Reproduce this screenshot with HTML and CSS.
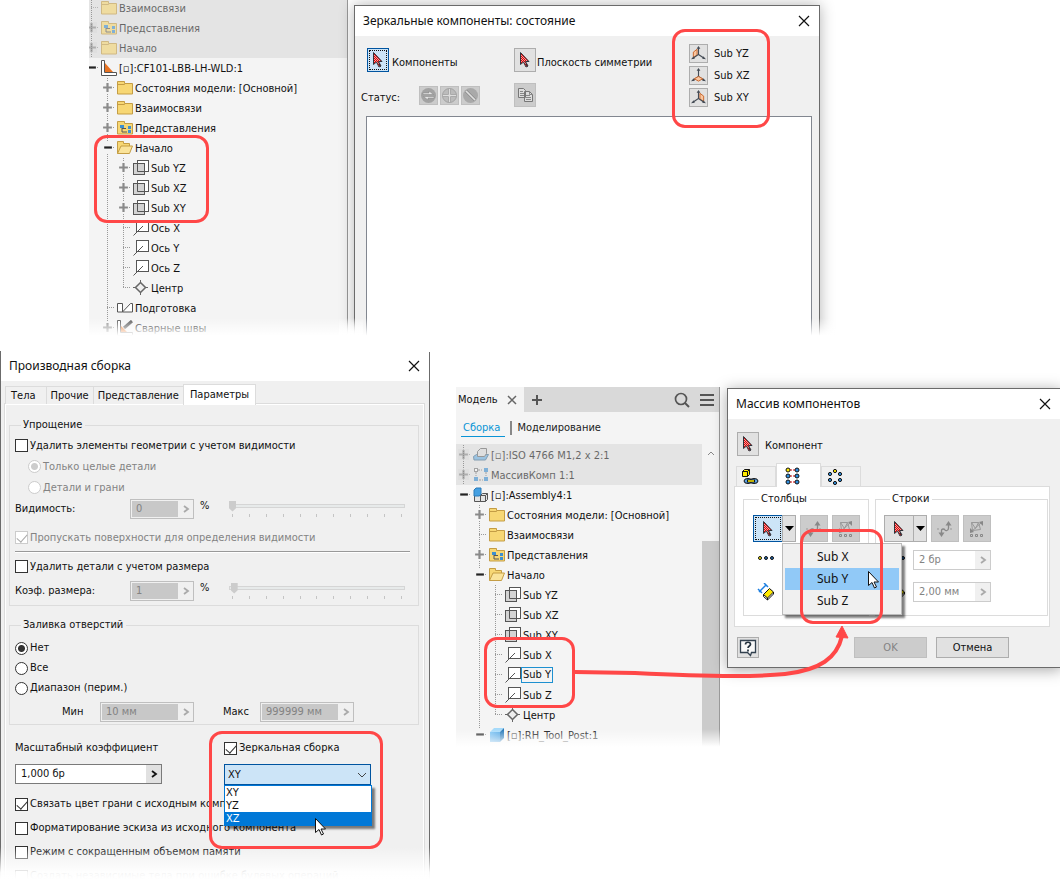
FILE: index.html
```html
<!DOCTYPE html>
<html lang="ru">

<head>
    <meta charset="UTF-8">
    <meta name="viewport" content="width=device-width, initial-scale=1.0">
    <title>Зеркальные компоненты</title>
    <link rel="stylesheet" href="styles.css">
</head>

<body>

    <!-- Icon set -->
    <svg class="icon-set" aria-hidden="true">
        <defs>
            <pattern id="dots-red" width="2" height="2" patternUnits="userSpaceOnUse">
                <rect width="2" height="2" fill="#f3a0a0" />
                <rect width="1" height="1" fill="#e00000" />
                <rect x="1" y="1" width="1" height="1" fill="#e00000" />
            </pattern>
            <linearGradient id="blue-face" x1="0" y1="0" x2="1" y2="1">
                <stop offset="0" stop-color="#7cc4f5" />
                <stop offset="1" stop-color="#2f8fd6" />
            </linearGradient>
        </defs>
        <symbol id="plus" viewBox="0 0 10 10"><path d="M1 5h8M5 1v8" stroke="#8a8a8a" stroke-width="2" /></symbol>
        <symbol id="minus" viewBox="0 0 10 10"><path d="M2 5h7" stroke="#222" stroke-width="2" /></symbol>
        <symbol id="folder" viewBox="0 0 16 16">
            <path d="M.5 1.500h7v2h8v10.500H.5z" fill="#f7d774" stroke="#c49d45" />
            <path d="M.5 4.500h7l1-1" fill="none" stroke="#c49d45" />
        </symbol>
        <symbol id="folder-open" viewBox="0 0 16 16">
            <path d="M.5 13.500v-12h6v2h6v2.500" fill="#f7d774" stroke="#c49d45" />
            <path d="M.5 13.500l3.500-7.500h11.500l-3 7.500z" fill="#fae39a" stroke="#c49d45" />
        </symbol>
        <symbol id="folder-views" viewBox="0 0 16 16">
            <path d="M.5 1.500h7v2h8v10.500H.5z" fill="#f7d774" stroke="#c49d45" />
            <path d="M5 8v4h5M5 8.500h4" fill="none" stroke="#555" />
            <path d="M3 5h4v3H3zM11 6h3v3h-3zM11 10h3v3h-3z" fill="#3d8fd0" />
        </symbol>
        <symbol id="plane" viewBox="0 0 16 16">
            <rect x="4.500" y=".5" width="11" height="11" fill="#fff" stroke="#555" />
            <rect x=".5" y="3.500" width="11" height="11" fill="#ccc" fill-opacity=".85" stroke="#555" />
            <path d="M4.500 4v7.500H11" fill="none" stroke="#555" />
        </symbol>
        <symbol id="axis" viewBox="0 0 16 16">
            <rect x="3.500" y=".5" width="12" height="11" fill="#fff" stroke="#555" />
            <path d="M.5 15.500L10 6" stroke="#555" />
        </symbol>
        <symbol id="center" viewBox="0 0 16 16">
            <path d="M0 7.500h15M7.500 0v15" stroke="#666" />
            <path d="M7.500 2.500l5 5-5 5-5-5z" fill="#eee" stroke="#666" stroke-width="1.500" />
        </symbol>
        <symbol id="weldment" viewBox="0 0 16 16">
            <path d="M4 3l8 9H4z" fill="#e87424" />
            <path d="M.5.5h3v12h12v3H.5z" fill="#fff" stroke="#555" />
        </symbol>
        <symbol id="prep" viewBox="0 0 16 16">
            <path d="M.5 3.500h5v8.500h-5zM5.500 12l8-8.500h2V12z" fill="#fff" stroke="#555" />
        </symbol>
        <symbol id="seam" viewBox="0 0 16 16">
            <path d="M.5.500h3v12h12v3H.5z" fill="#fff" stroke="#555" />
            <path d="M4 6l6 6H4z" fill="#e87424" />
            <path d="M7 8l8-7" stroke="#555" stroke-width="3" />
        </symbol>
        <symbol id="cube" viewBox="0 0 16 16">
            <path d="M1 5l4-4h10l-4 4z" fill="#a5dafa" />
            <path d="M1 5h10v10H1z" fill="url(#blue-face)" />
            <path d="M11 5l4-4v10l-4 4z" fill="#2276b8" />
        </symbol>
        <symbol id="assembly" viewBox="0 0 16 16">
            <path d="M1.500 8.500h6v6h-6zM7.500 8.500l2-2h5v6l-2 2h-5z" fill="#e4e4e4" stroke="#555" />
            <path d="M7.500 8.500h5v6M12.500 8.500l2-2" fill="none" stroke="#555" />
            <path d="M1 3l2-2h5v6L6.500 9H1z" fill="#45a0e2" stroke="#2a7ab8" />
        </symbol>
        <symbol id="screw" viewBox="0 0 16 16">
            <path d="M.5 9.500l3-2h12l-3 5.500H1z" fill="#6baee0" stroke="#456f90" />
            <path d="M4.500 9.500v-5l3-3h6v5l-2 3z" fill="#ddd" stroke="#666" />
        </symbol>
        <symbol id="comp-pattern" viewBox="0 0 16 16">
            <path d="M5 3h4M3 5v4M13 5v4M6 13h4" stroke="#777" stroke-dasharray="2 1" />
            <rect x="1.500" y="1.500" width="3" height="3" fill="#fff" stroke="#777" />
            <path d="M11 1h4v4h-4zM1 10h4v4H1zM11 10h4v4h-4z" fill="#3d8fd0" />
        </symbol>
        <symbol id="pick" viewBox="0 0 14 18">
            <path d="M2.500 1.500v12l3-2.500 2.500 5 2-1-2.500-4.500h3.500z" fill="url(#dots-red)" stroke="#30343c" />
            <path d="M8 12.500l1.500 3" stroke="#30343c" />
        </symbol>
        <symbol id="pointer" viewBox="0 0 14 20">
            <path d="M1.500 1.500v14l3.500-3 2.500 5.500 2-1-2.500-5h4.500z" fill="#fff" stroke="#111" />
        </symbol>
        <symbol id="close" viewBox="0 0 12 12"><path d="M1 1l10 10M11 1L1 11" stroke="#111" stroke-width="1.200" /></symbol>
        <symbol id="st-mirror" viewBox="0 0 17 17">
            <circle cx="8.500" cy="8.500" r="7.500" fill="#a3a3a3" />
            <path d="M3 6h6V4l4.500 3.500H3zM14 11H8v2L3.500 9.500H14z" fill="#e6e6e6" stroke="#858585" stroke-width=".5" />
        </symbol>
        <symbol id="st-add" viewBox="0 0 17 17">
            <circle cx="8.500" cy="8.500" r="7" fill="#bbb" stroke="#a3a3a3" />
            <path d="M8.500 2v13M2 8.500h13" stroke="#999" stroke-width="3" />
            <path d="M8.500 2v13M2 8.500h13" stroke="#ddd" stroke-width="1.500" />
        </symbol>
        <symbol id="st-none" viewBox="0 0 17 17">
            <circle cx="8.500" cy="8.500" r="7.500" fill="#a9a9a9" />
            <path d="M4 4l9 9" stroke="#888" stroke-width="3" />
            <path d="M4 4l9 9" stroke="#e0e0e0" stroke-width="1.700" />
        </symbol>
        <symbol id="copy" viewBox="0 0 16 16">
            <path d="M1.500 1.500h5l2 2v7h-7zM7.500 4.500h5l3 3v7h-8z" fill="#ddd" stroke="#777" />
            <path d="M3 4.500h3M3 6.500h4M3 8.500h4M9 8.500h4M9 10.500h5M9 12.500h5M12.500 4.500v3h3" fill="none" stroke="#888" />
        </symbol>
        <symbol id="tripod" viewBox="0 0 16 16">
            <path d="M8 1.500V9L2 13M8 9l6 4" fill="none" stroke="#444b55" stroke-width="1.200" />
            <path d="M8 0L6 3h4zM0 14l3-3 1 2.500zM16 14l-3-3-1 2.500z" fill="#444b55" />
        </symbol>
        <symbol id="yz" viewBox="0 0 16 16">
            <path d="M2.500 6.500l4-3v6l-4 3z" fill="#f9c6a0" stroke="#c8642a" />
            <use href="#tripod" />
        </symbol>
        <symbol id="xz" viewBox="0 0 16 16">
            <use href="#tripod" />
            <path d="M3.500 11.500L8 9l4.500 2.500L8 14z" fill="#f9c6a0" stroke="#c8642a" />
        </symbol>
        <symbol id="xy" viewBox="0 0 16 16">
            <path d="M9.500 3.500l4 3v6l-4-3z" fill="#f9c6a0" stroke="#c8642a" />
            <use href="#tripod" />
        </symbol>
        <symbol id="chevron" viewBox="0 0 8 8"><path d="M2 1l4 3-4 3" fill="none" stroke="currentColor" stroke-width="1.800" /></symbol>
        <symbol id="tab-chain" viewBox="0 0 18 18">
            <path d="M1.500 3.500l2-2h5v5l-2 2h-5z" fill="#ffea00" stroke="#111" />
            <path d="M1.500 3.500h5v5M6.500 3.500l2-2" fill="none" stroke="#111" />
            <ellipse cx="7" cy="13" rx="4" ry="2.500" fill="#5aa0e0" stroke="#111" />
            <ellipse cx="13" cy="13" rx="4" ry="2.500" fill="#5aa0e0" stroke="#111" />
            <path d="M6 13h8" stroke="#111" stroke-width="3" />
            <path d="M7 13h6" stroke="#ffea00" stroke-width="1.500" />
        </symbol>
        <symbol id="tab-rect" viewBox="0 0 16 18">
            <path d="M5 3h6M5 9h6M5 15h6" stroke="#e00000" stroke-dasharray="2 1" />
            <g fill="#2f8fe0" stroke="#111">
                <circle cx="3" cy="3" r="2" fill="#ffea00" />
                <circle cx="12" cy="3" r="2" />
                <circle cx="3" cy="9" r="2" />
                <circle cx="12" cy="9" r="2" />
                <circle cx="3" cy="15" r="2" />
                <circle cx="12" cy="15" r="2" />
            </g>
        </symbol>
        <symbol id="tab-circ" viewBox="0 0 16 18">
            <g fill="#2f8fe0" stroke="#111">
                <circle cx="8" cy="3" r="1.600" fill="#ffea00" />
                <circle cx="13" cy="6" r="1.600" />
                <circle cx="13" cy="12" r="1.600" />
                <circle cx="8" cy="15" r="1.600" />
                <circle cx="3" cy="12" r="1.600" />
                <circle cx="3" cy="6" r="1.600" />
            </g>
        </symbol>
        <symbol id="flip" viewBox="0 0 18 18">
            <path d="M1 9h3M14 9h3" stroke="#999" stroke-dasharray="2 1" />
            <path d="M5.500 14v-3c0-3 3-2 3.500-1s3.500 1 3.500-2V4" fill="none" stroke="#888" stroke-width="1.300" />
            <path d="M2.500 12.500h6l-3 4.500zM9.500 5.500h6l-3-4.500z" fill="#888" />
        </symbol>
        <symbol id="spread" viewBox="0 0 18 18">
            <path d="M3.500 2.500h7l-3 6zM3 12L14 2M3.500 2.500l1 8 8-1-2-7" fill="none" stroke="#999" />
            <path d="M15 1v5l-4-4zM2 13V8l4 4z" fill="#888" />
            <path d="M2.500 14.500h2v2h-2zM7.500 14.500h2v2h-2zM12.500 14.500h2v2h-2z" fill="none" stroke="#888" />
        </symbol>
        <symbol id="count" viewBox="0 0 18 6">
            <g fill="#2468b0" stroke="#111">
                <circle cx="3" cy="3" r="1.500" fill="#ffea00" />
                <circle cx="9" cy="3" r="1.500" />
                <circle cx="15" cy="3" r="1.500" />
            </g>
        </symbol>
        <symbol id="spacing" viewBox="0 0 18 18">
            <path d="M2 9l7-7M1 6l4 4M7 0l4 4" stroke="#1d7fe0" stroke-width="1.500" />
            <path d="M6.500 11.500l6-6 4 3.500-6 6z" fill="#ffea00" stroke="#111" />
            <path d="M6.500 11.500v2l4 3.500v-2M16.500 9v2l-6 6" fill="none" stroke="#111" />
        </symbol>
        <symbol id="help" viewBox="0 0 18 18">
            <path d="M1.500 1.500h15v12h-4l-1 3-3-3h-7z" fill="#f8f8f8" stroke="#33414f" stroke-width="1.300" />
            <path d="M6.500 5.500c0-3 5-3 5 0 0 1.500-2.500 1.500-2.500 3.500M9 10.500v2" fill="none" stroke="#22303d" stroke-width="1.700" />
        </symbol>
        <symbol id="search" viewBox="0 0 16 16">
            <circle cx="7" cy="7" r="5.500" fill="none" stroke="#555" stroke-width="1.700" />
            <path d="M11 11l4 4" stroke="#555" stroke-width="2" />
        </symbol>
        <symbol id="burger" viewBox="0 0 16 16"><path d="M1 3h14M1 8h14M1 13h14" stroke="#555" stroke-width="2" /></symbol>
    </svg>

    <main class="page">

        <section class="row row-top">
            <div class="browser faded">
                <ul class="tree tree-cut">
                    <li class="inactive">
                        <ul class="tree-group">
                            <li><div class="node"><span class="toggle"></span><svg class="ico"><use href="#folder" /></svg><span>Взаимосвязи</span></div></li>
                            <li><div class="node"><span class="toggle"><svg><use href="#plus" /></svg></span><svg class="ico"><use href="#folder-views" /></svg><span>Представления</span></div></li>
                            <li><div class="node"><span class="toggle"><svg><use href="#plus" /></svg></span><svg class="ico"><use href="#folder" /></svg><span>Начало</span></div></li>
                        </ul>
                    </li>
                    <li>
                        <div class="node"><span class="toggle"><svg><use href="#minus" /></svg></span><svg class="ico"><use href="#weldment" /></svg><span>[▫]:CF101-LBB-LH-WLD:1</span></div>
                        <ul class="branch">
                            <li><div class="node"><span class="toggle"><svg><use href="#plus" /></svg></span><svg class="ico"><use href="#folder" /></svg><span>Состояния модели: [Основной]</span></div></li>
                            <li><div class="node"><span class="toggle"><svg><use href="#plus" /></svg></span><svg class="ico"><use href="#folder" /></svg><span>Взаимосвязи</span></div></li>
                            <li><div class="node"><span class="toggle"><svg><use href="#plus" /></svg></span><svg class="ico"><use href="#folder-views" /></svg><span>Представления</span></div></li>
                            <li>
                                <div class="node"><span class="toggle"><svg><use href="#minus" /></svg></span><svg class="ico"><use href="#folder-open" /></svg><span>Начало</span></div>
                                <ul class="branch">
                                    <li><div class="node"><span class="toggle"><svg><use href="#plus" /></svg></span><svg class="ico"><use href="#plane" /></svg><span>Sub YZ</span></div></li>
                                    <li><div class="node"><span class="toggle"><svg><use href="#plus" /></svg></span><svg class="ico"><use href="#plane" /></svg><span>Sub XZ</span></div></li>
                                    <li><div class="node"><span class="toggle"><svg><use href="#plus" /></svg></span><svg class="ico"><use href="#plane" /></svg><span>Sub XY</span></div></li>
                                    <li><div class="node"><span class="toggle"></span><svg class="ico"><use href="#axis" /></svg><span>Ось X</span></div></li>
                                    <li><div class="node"><span class="toggle"></span><svg class="ico"><use href="#axis" /></svg><span>Ось Y</span></div></li>
                                    <li><div class="node"><span class="toggle"></span><svg class="ico"><use href="#axis" /></svg><span>Ось Z</span></div></li>
                                    <li><div class="node"><span class="toggle"></span><svg class="ico"><use href="#center" /></svg><span>Центр</span></div></li>
                                </ul>
                            </li>
                            <li><div class="node"><span class="toggle"></span><svg class="ico"><use href="#prep" /></svg><span>Подготовка</span></div></li>
                            <li><div class="node"><span class="toggle"><svg><use href="#plus" /></svg></span><svg class="ico"><use href="#seam" /></svg><span>Сварные швы</span></div></li>
                        </ul>
                    </li>
                </ul>
                <div class="mark mark-planes"></div>
            </div>

            <div class="dialog mirror-dialog faded">
                <header class="titlebar">
                    <h2>Зеркальные компоненты: состояние</h2>
                    <button class="close" aria-label="Закрыть"><svg><use href="#close" /></svg></button>
                </header>
                <div class="mirror-tools">
                    <div class="tool-col">
                        <div class="tool-line indent">
                            <button class="pick active" id="pick-comp"><svg><use href="#pick" /></svg></button>
                            <label for="pick-comp">Компоненты</label>
                        </div>
                        <div class="tool-line">
                            <span class="status-label">Статус:</span>
                            <button class="mini" disabled aria-label="Зеркально"><svg><use href="#st-mirror" /></svg></button>
                            <button class="mini" disabled aria-label="Добавить"><svg><use href="#st-add" /></svg></button>
                            <button class="mini" disabled aria-label="Исключить"><svg><use href="#st-none" /></svg></button>
                        </div>
                    </div>
                    <div class="tool-col">
                        <div class="tool-line tight">
                            <button class="pick" id="pick-plane"><svg><use href="#pick" /></svg></button>
                            <label for="pick-plane">Плоскость симметрии</label>
                        </div>
                        <div class="tool-line">
                            <button class="pick off" disabled aria-label="Копировать"><svg class="wide"><use href="#copy" /></svg></button>
                        </div>
                    </div>
                    <div class="plane-col">
                        <div class="plane-line"><button class="mini plain" id="p-yz"><svg><use href="#yz" /></svg></button><label for="p-yz">Sub YZ</label></div>
                        <div class="plane-line"><button class="mini plain" id="p-xz"><svg><use href="#xz" /></svg></button><label for="p-xz">Sub XZ</label></div>
                        <div class="plane-line"><button class="mini plain" id="p-xy"><svg><use href="#xy" /></svg></button><label for="p-xy">Sub XY</label></div>
                        <div class="mark mark-buttons"></div>
                    </div>
                </div>
                <div class="listbox"></div>
            </div>
        </section>

        <section class="row row-bottom">

            <div class="dialog derive-dialog faded">
                <header class="titlebar">
                    <h2>Производная сборка</h2>
                    <button class="close" aria-label="Закрыть"><svg><use href="#close" /></svg></button>
                </header>
                <div class="tabs">
                    <button class="tab">Тела</button>
                    <button class="tab">Прочие</button>
                    <button class="tab">Представление</button>
                    <button class="tab selected">Параметры</button>
                </div>
                <div class="tab-page">
                    <fieldset class="simplify">
                        <legend>Упрощение</legend>
                        <div class="line"><input type="checkbox" id="rm-vis"><label for="rm-vis">Удалить элементы геометрии с учетом видимости</label></div>
                        <div class="line sub"><input type="radio" name="vis" id="whole" checked disabled><label for="whole">Только целые детали</label></div>
                        <div class="line sub"><input type="radio" name="vis" id="faces" disabled><label for="faces">Детали и грани</label></div>
                        <div class="line">
                            <label class="caption" for="vis">Видимость:</label>
                            <span class="stepper off short"><input type="text" id="vis" value="0" disabled><button disabled aria-label="Ещё"><svg><use href="#chevron" /></svg></button></span>
                            <span class="percent">%</span>
                            <span class="slider">
                                <input type="range" min="0" max="100" value="0" disabled aria-label="Видимость">
                                <span class="ticks"><i></i><i></i><i></i><i></i><i></i><i></i><i></i><i></i><i></i><i></i><i></i></span>
                            </span>
                        </div>
                        <div class="line spaced"><input type="checkbox" id="skip" checked disabled><label for="skip">Пропускать поверхности для определения видимости</label></div>
                        <hr>
                        <div class="line"><input type="checkbox" id="rm-size"><label for="rm-size">Удалить детали с учетом размера</label></div>
                        <div class="line ratio">
                            <label class="caption" for="ratio">Коэф. размера:</label>
                            <span class="stepper off short"><input type="text" id="ratio" value="1" disabled><button disabled aria-label="Ещё"><svg><use href="#chevron" /></svg></button></span>
                            <span class="percent">%</span>
                            <span class="slider">
                                <input type="range" min="0" max="100" value="1" disabled aria-label="Коэффициент">
                                <span class="ticks"><i></i><i></i><i></i><i></i><i></i><i></i><i></i><i></i><i></i><i></i><i></i></span>
                            </span>
                        </div>
                    </fieldset>

                    <fieldset class="holes">
                        <legend>Заливка отверстий</legend>
                        <div class="line"><input type="radio" name="holes" id="h-none" checked><label for="h-none">Нет</label></div>
                        <div class="line"><input type="radio" name="holes" id="h-all"><label for="h-all">Все</label></div>
                        <div class="line"><input type="radio" name="holes" id="h-range"><label for="h-range">Диапазон (перим.)</label></div>
                        <div class="line range">
                            <label for="min">Мин</label>
                            <span class="stepper off"><input type="text" id="min" value="10 мм" disabled><button disabled aria-label="Ещё"><svg><use href="#chevron" /></svg></button></span>
                            <label for="max">Макс</label>
                            <span class="stepper off"><input type="text" id="max" value="999999 мм" disabled><button disabled aria-label="Ещё"><svg><use href="#chevron" /></svg></button></span>
                        </div>
                    </fieldset>

                    <div class="scale">
                        <div class="scale-col">
                            <div class="line"><label for="scale">Масштабный коэффициент</label></div>
                            <span class="stepper"><input type="text" id="scale" value="1,000 бр"><button aria-label="Ещё"><svg><use href="#chevron" /></svg></button></span>
                        </div>
                        <div class="mirror-col">
                            <div class="line"><input type="checkbox" id="mirror" checked><label for="mirror">Зеркальная сборка</label></div>
                            <div class="combo">
                                <select aria-label="Плоскость">
                                    <option>XY</option>
                                    <option>YZ</option>
                                    <option>XZ</option>
                                </select>
                                <svg class="arrow" viewBox="0 0 10 6"><path d="M1 1l4 4 4-4" fill="none" stroke="#444" /></svg>
                                <ul class="options">
                                    <li>XY</li>
                                    <li>YZ</li>
                                    <li class="hover">XZ</li>
                                </ul>
                                <svg class="pointer"><use href="#pointer" /></svg>
                            </div>
                            <div class="mark mark-mirror"></div>
                        </div>
                    </div>

                    <div class="checks">
                        <div class="line"><input type="checkbox" id="c1" checked><label for="c1">Связать цвет грани с исходным компонентом</label></div>
                        <div class="line"><input type="checkbox" id="c2"><label for="c2">Форматирование эскиза из исходного компонента</label></div>
                        <div class="line"><input type="checkbox" id="c3"><label for="c3">Режим с сокращенным объемом памяти</label></div>
                        <div class="line"><input type="checkbox" id="c4"><label for="c4">Создать независимые тела при ошибке булевых операций</label></div>
                    </div>
                </div>
            </div>

            <div class="browser model-browser faded">
                <div class="panel-tabs">
                    <button class="panel-tab">Модель <svg viewBox="0 0 10 10"><path d="M1 1l8 8M9 1L1 9" stroke="#666" stroke-width="1.500" /></svg></button>
                    <button class="panel-btn add" aria-label="Добавить"><svg viewBox="0 0 12 12"><path d="M1 6h10M6 1v10" stroke="#555" stroke-width="2" /></svg></button>
                    <button class="panel-btn" aria-label="Поиск"><svg><use href="#search" /></svg></button>
                    <button class="panel-btn" aria-label="Меню"><svg><use href="#burger" /></svg></button>
                </div>
                <nav class="modes">
                    <a class="current" href="#">Сборка</a>
                    <a href="#">Моделирование</a>
                </nav>
                <div class="tree-area">
                    <ul class="tree">
                        <li class="inactive">
                            <ul class="tree-group">
                                <li><div class="node"><span class="toggle"><svg><use href="#plus" /></svg></span><svg class="ico"><use href="#screw" /></svg><span>[▫]:ISO 4766 M1,2 x 2:1</span></div></li>
                                <li><div class="node"><span class="toggle"><svg><use href="#plus" /></svg></span><svg class="ico"><use href="#comp-pattern" /></svg><span>МассивКомп 1:1</span></div></li>
                            </ul>
                        </li>
                        <li>
                            <div class="node"><span class="toggle"><svg><use href="#minus" /></svg></span><svg class="ico"><use href="#assembly" /></svg><span>[▫]:Assembly4:1</span></div>
                            <ul class="branch">
                                <li><div class="node"><span class="toggle"><svg><use href="#plus" /></svg></span><svg class="ico"><use href="#folder" /></svg><span>Состояния модели: [Основной]</span></div></li>
                                <li><div class="node"><span class="toggle"></span><svg class="ico"><use href="#folder" /></svg><span>Взаимосвязи</span></div></li>
                                <li><div class="node"><span class="toggle"><svg><use href="#plus" /></svg></span><svg class="ico"><use href="#folder-views" /></svg><span>Представления</span></div></li>
                                <li>
                                    <div class="node"><span class="toggle"><svg><use href="#minus" /></svg></span><svg class="ico"><use href="#folder-open" /></svg><span>Начало</span></div>
                                    <ul class="branch">
                                        <li><div class="node"><span class="toggle"></span><svg class="ico"><use href="#plane" /></svg><span>Sub YZ</span></div></li>
                                        <li><div class="node"><span class="toggle"></span><svg class="ico"><use href="#plane" /></svg><span>Sub XZ</span></div></li>
                                        <li><div class="node"><span class="toggle"></span><svg class="ico"><use href="#plane" /></svg><span>Sub XY</span></div></li>
                                        <li><div class="node"><span class="toggle"></span><svg class="ico"><use href="#axis" /></svg><span>Sub X</span></div></li>
                                        <li><div class="node"><span class="toggle"></span><svg class="ico"><use href="#axis" /></svg><span class="focused">Sub Y</span></div></li>
                                        <li><div class="node"><span class="toggle"></span><svg class="ico"><use href="#axis" /></svg><span>Sub Z</span></div></li>
                                        <li><div class="node"><span class="toggle"></span><svg class="ico"><use href="#center" /></svg><span>Центр</span></div></li>
                                    </ul>
                                </li>
                                <li><div class="node"><span class="toggle"><svg><use href="#minus" /></svg></span><svg class="ico"><use href="#cube" /></svg><span>[▫]:RH_Tool_Post:1</span></div></li>
                            </ul>
                        </li>
                    </ul>
                    <div class="scrollbar">
                        <svg viewBox="0 0 8 5"><path d="M1 4l3-3 3 3" fill="none" stroke="#888" /></svg>
                        <div class="thumb"></div>
                    </div>
                </div>
                <div class="mark mark-axes"></div>
            </div>

            <div class="dialog pattern-dialog">
                <header class="titlebar">
                    <h2>Массив компонентов</h2>
                    <button class="close" aria-label="Закрыть"><svg><use href="#close" /></svg></button>
                </header>
                <div class="pattern-body">
                    <div class="tool-line comp-line">
                        <button class="pick" id="pick-c"><svg><use href="#pick" /></svg></button>
                        <label for="pick-c">Компонент</label>
                    </div>
                    <div class="icon-tabs">
                        <button class="icon-tab" aria-label="По элементу"><svg><use href="#tab-chain" /></svg></button>
                        <button class="icon-tab selected" aria-label="Прямоугольный"><svg><use href="#tab-rect" /></svg></button>
                        <button class="icon-tab" aria-label="Круговой"><svg><use href="#tab-circ" /></svg></button>
                    </div>
                    <div class="pattern-page">
                        <fieldset class="columns">
                            <legend>Столбцы</legend>
                            <div class="pattern-tools">
                                <button class="split-main active" aria-label="Выбор"><svg class="p"><use href="#pick" /></svg></button>
                                <button class="split-arrow" aria-label="Список"><svg viewBox="0 0 9 5"><path d="M0 0h9L4.500 5z" /></svg></button>
                                <button class="tool off" disabled aria-label="Обратить"><svg><use href="#flip" /></svg></button>
                                <button class="tool off" disabled aria-label="Посередине"><svg><use href="#spread" /></svg></button>
                            </div>
                            <div class="param"><svg class="count"><use href="#count" /></svg></div>
                            <div class="param"><svg><use href="#spacing" /></svg></div>
                            <ul class="menu">
                                <li>Sub X</li>
                                <li class="hover">Sub Y</li>
                                <li>Sub Z</li>
                            </ul>
                            <svg class="pointer"><use href="#pointer" /></svg>
                            <div class="mark mark-menu"></div>
                        </fieldset>
                        <fieldset class="rows">
                            <legend>Строки</legend>
                            <div class="pattern-tools">
                                <button class="split-main" aria-label="Выбор"><svg class="p"><use href="#pick" /></svg></button>
                                <button class="split-arrow" aria-label="Список"><svg viewBox="0 0 9 5"><path d="M0 0h9L4.500 5z" /></svg></button>
                                <button class="tool off" disabled aria-label="Обратить"><svg><use href="#flip" /></svg></button>
                                <button class="tool off" disabled aria-label="Посередине"><svg><use href="#spread" /></svg></button>
                            </div>
                            <div class="param"><svg class="count"><use href="#count" /></svg><span class="stepper light"><input type="text" value="2 бр" disabled aria-label="Количество"><button disabled aria-label="Ещё"><svg><use href="#chevron" /></svg></button></span></div>
                            <div class="param"><svg><use href="#spacing" /></svg><span class="stepper light"><input type="text" value="2,00 мм" disabled aria-label="Интервал"><button disabled aria-label="Ещё"><svg><use href="#chevron" /></svg></button></span></div>
                        </fieldset>
                    </div>
                    <div class="actions">
                        <button class="pick help" aria-label="Справка"><svg><use href="#help" /></svg></button>
                        <button class="btn off" disabled>OK</button>
                        <button class="btn">Отмена</button>
                    </div>
                </div>
                <!-- arrow from the axes in the tree to the menu -->
                <svg class="link-arrow" viewBox="0 0 280 64">
                    <path d="M0 46L60 47C120 50 180 51 210 48C245 44 262 32 267 10" fill="none" stroke="#ff4747" stroke-width="4" />
                    <path d="M267 0l6 12-12-1z" fill="#ff4747" stroke="#ff4747" />
                </svg>
            </div>
        </section>

    </main>

</body>

</html>
```
FILE: styles.css
```css
* {
    margin: 0;
    padding: 0;
    box-sizing: border-box;
}

body {
    background: #fff;
    color: #111;
    font-family: "DejaVu Sans Condensed", "Noto Sans", sans-serif;
    font-size: 11px;
    line-height: 14px;
}

ul {
    list-style: none;
}

button,
input,
select {
    font: inherit;
    color: inherit;
}

button {
    display: flex;
    align-items: center;
    justify-content: center;
    border: 1px solid #adadad;
    background: #e1e1e1;
}

label,
legend,
h2 {
    white-space: nowrap;
}

.icon-set {
    position: absolute;
    width: 0;
    height: 0;
}

.page {
    overflow: hidden;
}

.row {
    display: grid;
    align-items: start;
}

.row-top {
    grid-template-columns: 259fr 466fr;
    column-gap: 6px;
    padding: 0 240px 14px 89px;
}

.row-bottom {
    grid-template-columns: 430fr 283fr 333fr;
    column-gap: 7px;
}

/* Panels fade out to the page at the bottom */
.faded {
    position: relative;
}

.faded::after {
    content: '';
    position: absolute;
    left: -16px;
    right: -16px;
    bottom: -16px;
    height: 34px;
    background: linear-gradient(rgba(255, 255, 255, 0), #fff 52%);
    z-index: 2;
    pointer-events: none;
}

.mark {
    position: absolute;
    border: 3px solid #ff4747;
    border-radius: 13px;
    z-index: 4;
    pointer-events: none;
}

/* Model browser */
.browser {
    background: #f4f4f4;
    border-right: 1px solid #999;
}

.row-top .browser {
    height: 336px;
}

.tree {
    flex: 1;
    min-width: 0;
    overflow: hidden;
}

.tree-cut > li {
    margin-left: -6px;
}

.tree-cut .inactive {
    margin-top: -2px;
}

.inactive {
    background: #e4e4e4;
}

.inactive .node {
    opacity: 0.6;
}

.tree-group,
.branch {
    background: repeating-linear-gradient(#999 0 1px, transparent 1px 2px) 8px 0 / 1px calc(100% - 10px) no-repeat;
}

.tree-group {
    background-size: 1px 100%;
}

.branch {
    margin-left: 16px;
}

.node {
    display: flex;
    align-items: center;
    height: 20px;
    white-space: nowrap;
}

.node > span:last-child {
    padding: 1px 0 0 2px;
}

.node > .focused:last-child {
    padding: 0 1px;
    border: 1px solid #1e90d0;
}

.toggle {
    width: 18px;
    height: 20px;
    padding: 4px 3px;
    background: repeating-linear-gradient(90deg, #999 0 1px, transparent 1px 2px) 8px 9px / 8px 1px no-repeat;
}

.toggle svg {
    display: block;
    width: 11px;
    height: 11px;
    background: #f4f4f4;
}

.inactive .toggle svg {
    background: #ddd;
}

.ico {
    width: 16px;
    height: 16px;
}

.mark-planes {
    left: 5px;
    top: 135px;
    width: 115px;
    height: 88px;
}

/* Dialogs */
.dialog {
    background: #f0f0f0;
    border: 1px solid #6b6b6b;
}

.titlebar {
    display: flex;
    align-items: center;
    justify-content: space-between;
    height: 30px;
    padding: 0 8px;
    background: #fff;
}

.titlebar h2 {
    font: 12px/16px "Noto Sans", "Open Sans", sans-serif;
}

.close {
    width: 14px;
    height: 14px;
    border: 0;
    background: none;
}

.close svg {
    width: 12px;
    height: 12px;
}

.mirror-dialog {
    margin-top: 5px;
    height: 331px;
    border-bottom: 0;
    box-shadow: 0 0 14px rgba(0, 0, 0, 0.3);
}

.mirror-tools {
    display: grid;
    grid-template-columns: 153fr 175fr 130fr;
    height: 80px;
    padding-left: 6px;
}

.tool-col {
    display: flex;
    flex-direction: column;
    gap: 11px;
    padding-top: 12px;
}

.tool-line {
    display: flex;
    align-items: center;
    gap: 3px;
    height: 24px;
}

.tool-line label {
    padding-top: 6px;
}

.indent {
    padding-left: 6px;
}

.tight {
    gap: 1px;
}

.status-label {
    width: 55px;
    padding-top: 5px;
}

.pick {
    width: 22px;
    height: 24px;
}

.pick svg {
    width: 14px;
    height: 18px;
}

.pick svg.wide {
    width: 16px;
}

.active {
    background: #cce4f7;
    border-color: #0054a0;
    outline: 1px dotted #111;
    outline-offset: -3px;
}

.off {
    background: #ccc;
    border-color: #bfbfbf;
    color: #838383;
}

.mini {
    width: 19px;
    height: 19px;
    border-color: #bfbfbf;
    background: #ccc;
}

.tool-line .mini + .mini {
    margin-left: -1px;
}

.mini svg {
    width: 17px;
    height: 17px;
}

.mini.plain {
    border-color: #adadad;
    background: #e1e1e1;
}

.mini.plain svg {
    width: 15px;
    height: 15px;
}

.plane-col {
    position: relative;
    display: flex;
    flex-direction: column;
    gap: 3px;
    padding-top: 8px;
}

.plane-line {
    display: flex;
    align-items: center;
    gap: 6px;
}

.mark-buttons {
    left: -17px;
    top: -7px;
    width: 98px;
    height: 99px;
}

.listbox {
    height: 220px;
    margin: 0 7px 0 11px;
    background: #fff;
    border: 1px solid #828790;
    border-bottom: 0;
}

/* Derived assembly */
.derive-dialog {
    height: 530px;
    margin-top: 1px;
    border-top: 0;
    border-bottom: 0;
}

.derive-dialog::after {
    left: -1px;
    right: -1px;
    bottom: 0;
    background: linear-gradient(rgba(255, 255, 255, 0), rgba(255, 255, 255, 0.95) 75%, #fff 95%);
}

.tabs {
    display: flex;
    align-items: flex-end;
    height: 23px;
    padding-left: 4px;
}

.tab {
    height: 18px;
    padding: 0 4px;
    border-color: #dcdcdc;
    border-left: 0;
    border-bottom: 0;
    background: #f0f0f0;
}

.tab:first-child {
    padding: 0 10px 0 5px;
    border-left: 1px solid #dcdcdc;
}

.tab.selected {
    height: 21px;
    margin: 0 0 -1px -1px;
    padding: 0 6px;
    background: #fff;
    border-left: 1px solid #dcdcdc;
}

.tab-page {
    margin: -1px 4px 0 3px;
    padding: 14px 5px 0 4px;
    border: 1px solid #dcdcdc;
    border-bottom: 0;
    box-shadow: inset 1px 1px #fff, inset -1px 0 #fff;
}

fieldset {
    min-width: 0;
    border: 1px solid #dcdcdc;
}

legend {
    margin-left: 6px;
    padding: 0 3px 0 2px;
}

.simplify {
    padding: 3px 5px 4px;
}

.line {
    display: flex;
    align-items: center;
    height: 21px;
}

.line input:disabled + label {
    color: #838383;
}

.sub {
    padding-left: 13px;
}

.spaced {
    margin-top: 8px;
}

.ratio {
    margin-top: 3px;
}

hr {
    margin: 3px 3px 3px 0;
    border: 0;
    border-top: 1px solid #999;
    border-bottom: 1px solid #fff;
}

input[type="checkbox"],
input[type="radio"] {
    appearance: none;
    flex: none;
    width: 13px;
    height: 13px;
    margin-right: 2px;
    border: 1px solid #333;
    background: #fff;
}

input[type="radio"] {
    border-radius: 50%;
}

input[type="radio"]:checked {
    background: radial-gradient(#333 0 3px, #fff 4px);
}

input[type="checkbox"]:checked::before {
    content: '';
    display: block;
    width: 9px;
    height: 5px;
    margin: 2px 0 0 1px;
    border: solid #333;
    border-width: 0 0 1px 1px;
    transform: rotate(-48deg);
}

input[type="checkbox"]:disabled,
input[type="radio"]:disabled {
    border-color: #ccc;
}

input[type="checkbox"]:disabled::before {
    border-color: #aaa;
}

input[type="radio"]:disabled:checked {
    background: radial-gradient(#ccc 0 3px, #fff 4px);
}

.caption {
    width: 115px;
}

.stepper {
    display: flex;
    width: 94px;
    height: 20px;
    border: 1px solid #7a7a7a;
    background: #fff;
}

.stepper input {
    flex: 1;
    width: 0;
    min-width: 0;
    padding-left: 5px;
    border: 0;
    background: none;
}

.stepper button {
    width: 15px;
    border: 0;
    background: #e1e1e1;
}

.stepper svg {
    width: 8px;
    height: 8px;
}

.stepper.off {
    border-color: #bfbfbf;
    background: #f0f0f0;
}

.stepper.off input {
    margin: 1px 0 1px 1px;
    padding-left: 4px;
    background: #c8c8c8;
}

.stepper.off button,
.stepper.light button {
    background: #f0f0f0;
    color: #aaa;
}

.stepper.short {
    width: 64px;
}

.percent {
    width: 35px;
    padding: 0 0 6px 6px;
}

.slider {
    flex: 1;
    margin-right: 8px;
    height: 17px;
}

.slider input {
    appearance: none;
    display: block;
    width: 100%;
    height: 12px;
    background: linear-gradient(#e7eaea, #e7eaea) 1px 5px / calc(100% - 2px) 2px no-repeat, linear-gradient(#d5d5d5, #d5d5d5) 0 4px / 100% 4px no-repeat;
}

.slider input::-webkit-slider-thumb {
    appearance: none;
    width: 7px;
    height: 11px;
    background: #ccc;
    clip-path: polygon(0 0, 100% 0, 100% 70%, 50% 100%, 0 70%);
}

.ticks {
    display: flex;
    justify-content: space-between;
    padding: 2px 3px 0;
}

.ticks i {
    width: 1px;
    height: 3px;
    background: #c4c4c4;
}

.holes {
    margin-top: 12px;
    padding: 6px 5px 2px;
}

.holes .line {
    height: 20px;
}

.holes .range {
    margin-top: 4px;
    padding-left: 47px;
}

.range label {
    width: 38px;
}

.range .stepper + label {
    margin-left: 29px;
    width: 37px;
}

.scale {
    display: grid;
    grid-template-columns: 209fr 195fr;
    margin-top: 13px;
    padding-left: 6px;
}

.scale .line {
    height: 20px;
    margin-bottom: 6px;
}

.scale .stepper {
    width: 147px;
}

.mirror-col {
    position: relative;
}

.combo {
    position: relative;
    width: 147px;
    z-index: 1;
}

.combo select {
    appearance: none;
    display: block;
    width: 100%;
    height: 21px;
    padding-left: 3px;
    border: 1px solid #0054a0;
    border-radius: 0;
    background: #cce4f7;
}

.combo .arrow {
    position: absolute;
    right: 4px;
    top: 8px;
    width: 10px;
    height: 6px;
}

.options {
    position: absolute;
    top: 21px;
    left: 0;
    width: 148px;
    background: #fff;
    border: 1px solid #0078d7;
    box-shadow: 3px 3px 2px rgba(0, 0, 0, 0.5);
}

.options li {
    height: 13px;
    padding-left: 1px;
    line-height: 14px;
}

.options .hover {
    background: #0078d7;
    color: #fff;
}

.pointer {
    position: absolute;
    width: 14px;
    height: 20px;
    z-index: 3;
}

.combo .pointer {
    left: 90px;
    top: 53px;
}

.mark-mirror {
    left: -15px;
    top: -7px;
    width: 174px;
    height: 118px;
}

.checks {
    margin-top: 7px;
    padding-left: 6px;
}

.checks .line {
    height: 24px;
}

/* Right-hand model browser */
.model-browser {
    margin: 37px 0 0 19px;
    height: 360px;
}

.panel-tabs {
    display: flex;
    height: 25px;
    background: #d9d9d9;
}

.panel-tabs button {
    border: 0;
    background: none;
}

.panel-tabs .panel-tab {
    justify-content: space-between;
    width: 68px;
    padding: 0 7px 0 2px;
    background: #f4f4f4;
}

.panel-tab svg {
    width: 10px;
    height: 10px;
}

.panel-btn {
    width: 25px;
}

.panel-btn svg {
    width: 16px;
    height: 16px;
}

.panel-btn.add {
    margin-right: auto;
}

.panel-btn.add svg {
    width: 12px;
    height: 12px;
}

.modes {
    display: flex;
    gap: 5px;
    height: 32px;
    padding: 9px 5px;
}

.modes a {
    color: #222;
    text-decoration: none;
}

.modes .current {
    height: 16px;
    padding: 0 5px 0 2px;
    color: #0a94d6;
    border-bottom: 1px solid #0a94d6;
}

.modes .current + a {
    height: 14px;
    padding-left: 5px;
    border-left: 2px solid #888;
}

.tree-area {
    display: flex;
    height: 303px;
}

.model-browser .tree > li {
    margin-left: -1px;
}

.model-browser .inactive {
    padding-top: 1px;
}

.scrollbar {
    display: flex;
    flex-direction: column;
    align-items: center;
    width: 17px;
}

.scrollbar svg {
    width: 8px;
    height: 5px;
    margin: 7px 0 85px;
}

.thumb {
    flex: 1;
    width: 100%;
    background: #cbcbcb;
}

.mark-axes {
    left: 28px;
    top: 250px;
    width: 91px;
    height: 71px;
}

/* Pattern dialog */
.pattern-dialog {
    position: relative;
    margin: 38px -2px 0 0;
    box-shadow: 0 2px 14px rgba(0, 0, 0, 0.35);
}

.pattern-dialog .titlebar {
    padding-right: 9px;
}

.pattern-body {
    padding: 13px 11px 9px 6px;
}

.comp-line {
    gap: 6px;
    padding-left: 3px;
}

.comp-line label {
    padding-top: 3px;
}

.icon-tabs {
    display: flex;
    align-items: flex-end;
    height: 30px;
    padding-left: 2px;
}

.icon-tab {
    width: 40px;
    height: 20px;
    padding-right: 12px;
    border-color: #dcdcdc;
    border-bottom: 0;
    background: #f0f0f0;
}

.icon-tab svg {
    flex: none;
    width: 18px;
    height: 18px;
}

.icon-tab.selected {
    position: relative;
    width: 45px;
    height: 24px;
    margin-bottom: -1px;
    background: #fff;
}

.pattern-page {
    display: grid;
    grid-template-columns: 126fr 173fr;
    gap: 6px;
    height: 141px;
    padding: 5px 1px 10px 8px;
    border: 1px solid #dcdcdc;
    background: #fff;
}

.columns {
    position: relative;
}

.columns,
.rows {
    padding: 9px 0 0 9px;
}

.pattern-page .rows {
    padding-left: 8px;
}

.pattern-tools {
    display: flex;
    height: 27px;
    margin-bottom: 8px;
}

.split-main {
    width: 30px;
}

.split-arrow {
    width: 14px;
    margin-left: -1px;
}

.split-arrow svg {
    flex: none;
    width: 9px;
    height: 5px;
}

.tool {
    width: 28px;
    margin-left: 4px;
}

.tool svg,
.split-main svg {
    width: 18px;
    height: 18px;
}

.split-main svg.p {
    width: 14px;
}

.param {
    display: flex;
    align-items: center;
    gap: 7px;
    height: 20px;
    margin-bottom: 12px;
    padding-left: 4px;
}

.param > svg {
    width: 18px;
    height: 18px;
}

.param svg.count {
    height: 6px;
    margin-bottom: 4px;
}

.stepper.light {
    width: 78px;
    border-color: #ccc;
    color: #838383;
}

.menu {
    position: absolute;
    left: 38px;
    top: 37px;
    width: 120px;
    padding: 2px;
    background: #f0f0f0;
    border: 1px solid #bbb;
    box-shadow: 3px 3px 2px rgba(0, 0, 0, 0.5);
    font: 12px/22px "Noto Sans", "Open Sans", sans-serif;
    z-index: 2;
}

.menu li {
    padding-left: 32px;
}

.menu .hover {
    background: #91c9f7;
}

.columns .pointer {
    left: 123px;
    top: 64px;
}

.mark-menu {
    left: 56px;
    top: 23px;
    width: 83px;
    height: 95px;
}

.actions {
    display: flex;
    align-items: center;
    gap: 9px;
    margin-top: 10px;
    padding-left: 3px;
}

.help {
    height: 21px;
    margin-right: auto;
}

.help svg {
    width: 18px;
    height: 18px;
}

.btn {
    width: 73px;
    height: 21px;
}

.btn:last-child {
    margin-right: 41px;
}

.link-arrow {
    position: absolute;
    left: -153px;
    top: 237px;
    width: 280px;
    height: 64px;
    z-index: 5;
    pointer-events: none;
}
```
